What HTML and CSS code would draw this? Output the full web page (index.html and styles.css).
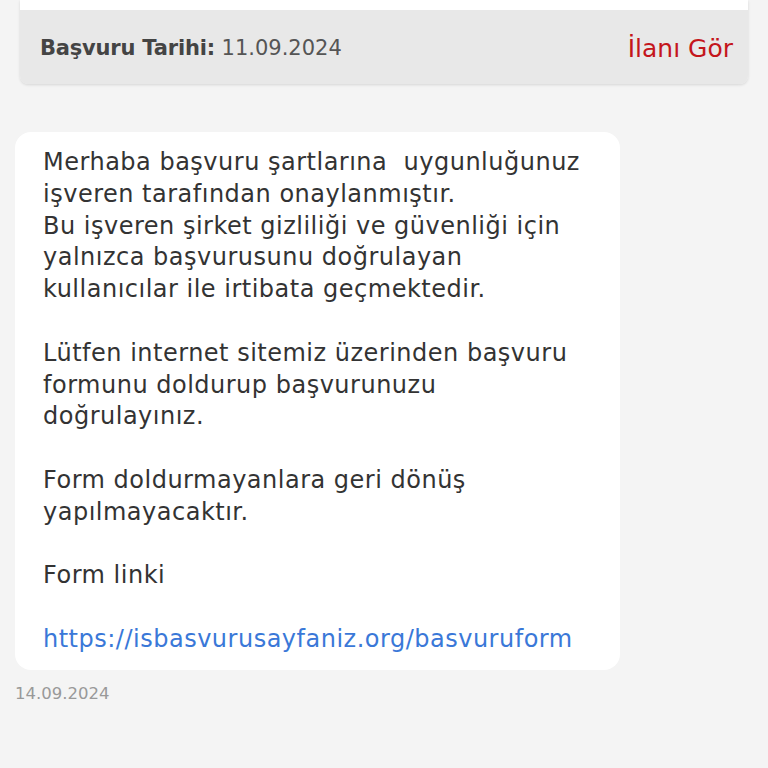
FILE: index.html
```html
<!DOCTYPE html>
<html lang="tr">
<head>
<meta charset="utf-8">
<link rel="stylesheet" href="styles.css">
</head>
<body>
<div class="page">
  <div class="card">
    <div class="card-top"></div>
    <div class="card-foot">
      <div class="date-info"><span class="label">Başvuru Tarihi:</span> <span class="value">11.09.2024</span></div>
      <a class="view-link">İlanı Gör</a>
    </div>
  </div>
  <div class="message">
    <div class="bubble"><p class="text">Merhaba başvuru şartlarına  uygunluğunuz
işveren tarafından onaylanmıştır.
Bu işveren şirket gizliliği ve güvenliği için
yalnızca başvurusunu doğrulayan
kullanıcılar ile irtibata geçmektedir.

Lütfen internet sitemiz üzerinden başvuru
formunu doldurup başvurunuzu
doğrulayınız.

Form doldurmayanlara geri dönüş
yapılmayacaktır.

Form linki

<span class="link">https://isbasvurusayfaniz.org/basvuruform</span></p></div>
    <div class="msg-date">14.09.2024</div>
  </div>
</div>
</body>
</html>
```
FILE: styles.css
```css
html, body {
  margin: 0;
  padding: 0;
  background: #f4f4f4;
  width: 768px;
  height: 768px;
  overflow: hidden;
}
.page {
  font-family: "DejaVu Sans", sans-serif;
  color: #333;
}
.card {
  margin: 0 20px;
  width: 728px;
  border-radius: 0 0 8px 8px;
  box-shadow: 0 1px 3px rgba(0,0,0,0.12);
  overflow: hidden;
}
.card-top {
  height: 10px;
  background: #fff;
}
.card-foot {
  height: 74px;
  background: #e8e8e8;
  display: flex;
  align-items: center;
  justify-content: space-between;
  padding: 0 15px 0 20px;
}
.date-info {
  font-size: 21px;
  color: #444;
  padding-top: 2px;
}
.label {
  font-weight: bold;
  letter-spacing: -0.2px;
}
.value {
  color: #555;
}
.view-link {
  font-size: 25px;
  color: #c4161c;
  padding-top: 2px;
}
.message {
  margin: 48px 0 0 15px;
}
.bubble {
  width: 605px;
  box-sizing: border-box;
  background: #fff;
  border-radius: 16px;
  padding: 15px 20px 14px 28px;
}
.text {
  margin: 0;
  white-space: pre-wrap;
  font-size: 24px;
  letter-spacing: 0.5px;
  line-height: 31.8px;
  color: #333;
}
.link {
  color: #3a78d8;
}
.msg-date {
  margin-top: 14px;
  font-size: 16.5px;
  color: #999;
}
```
